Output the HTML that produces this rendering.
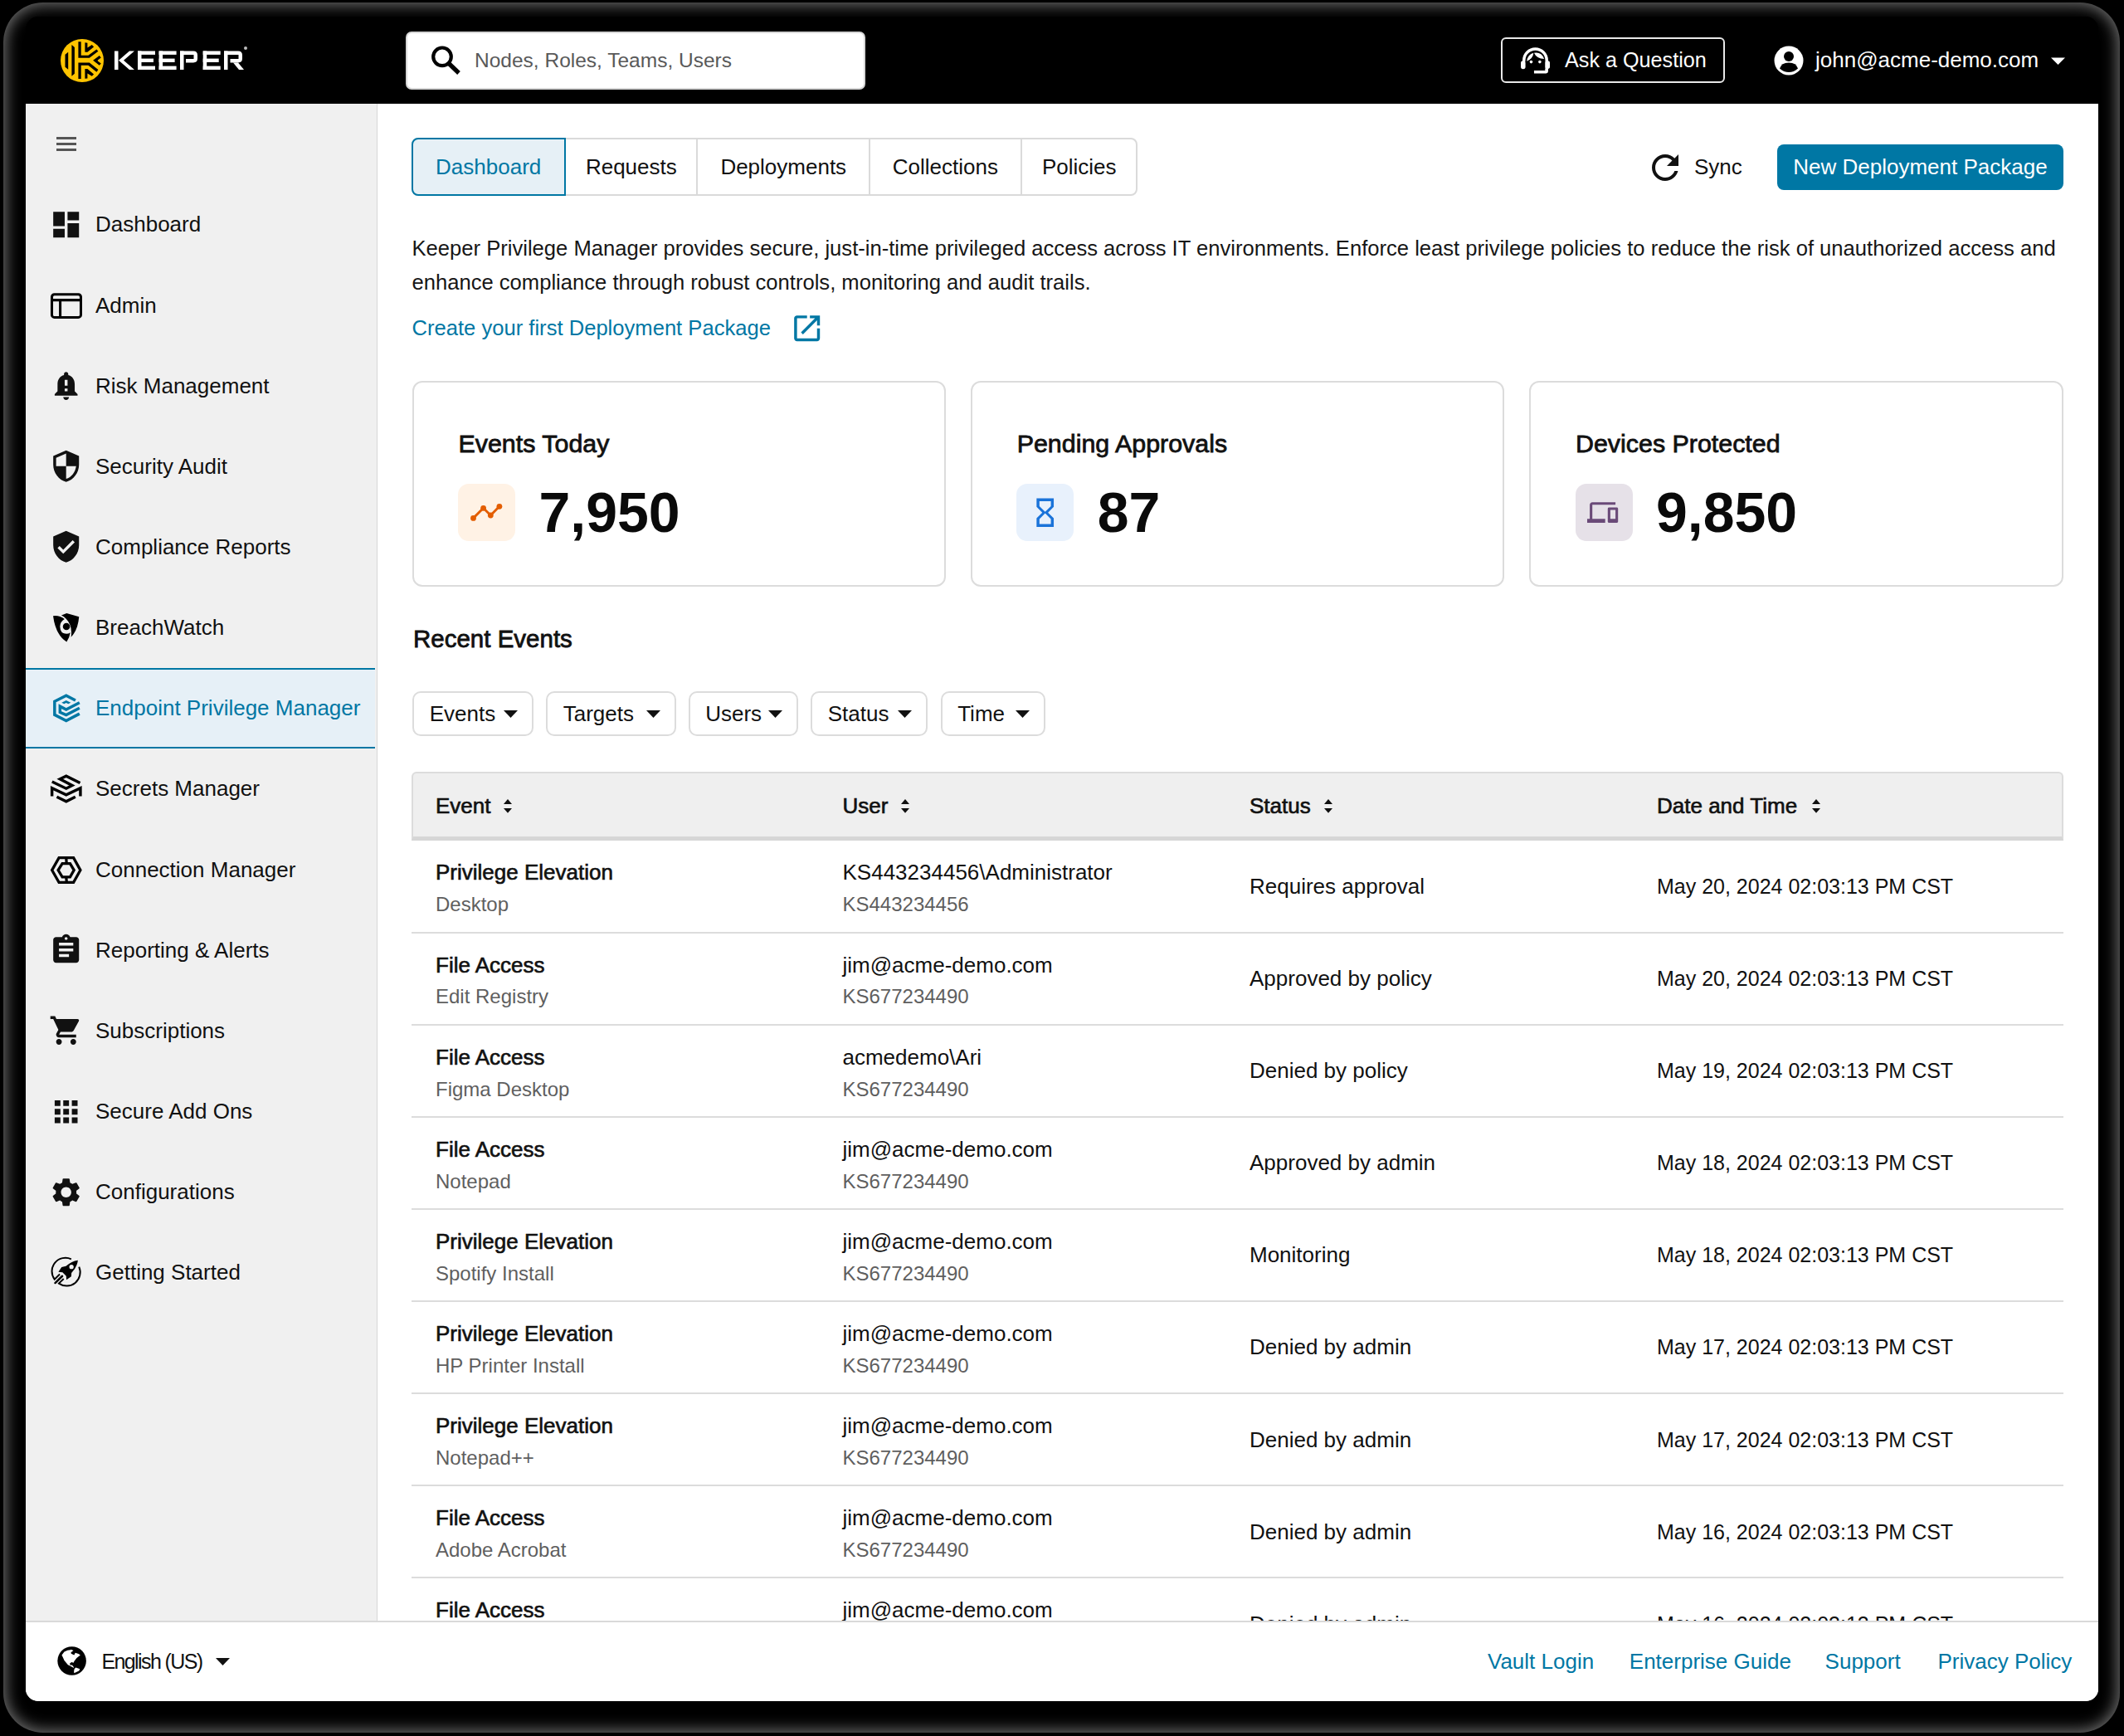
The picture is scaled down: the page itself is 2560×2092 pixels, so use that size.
<!DOCTYPE html>
<html><head><meta charset="utf-8">
<style>
*{box-sizing:border-box;margin:0;padding:0}
html,body{width:2560px;height:2092px;overflow:hidden;background:#000}
body{position:relative;font-family:"Liberation Sans",sans-serif;color:#141414}
.a{position:absolute}
.t{position:absolute;white-space:nowrap;line-height:40px;height:40px;font-size:26px}
svg{position:absolute;overflow:visible}
</style></head><body>
<!-- shadow fringe -->
<div class="a" style="left:4px;top:3px;width:2551px;height:2085px;border-radius:48px;background:#000;box-shadow:inset 0 0 18px 3px rgba(150,150,150,.75)"></div>
<!-- window base -->
<div class="a" style="left:31px;top:100px;width:2498px;height:1950px;border-radius:0 0 15px 15px;background:#fff"></div>
<!-- header -->
<div class="a" style="left:31px;top:20px;width:2498px;height:105px;background:#000;border-radius:15px 15px 0 0"></div>
<!-- logo -->
<svg style="left:0;top:0" width="320" height="124" viewBox="0 0 320 124">
  <defs><clipPath id="lc"><circle cx="99" cy="73" r="26"/></clipPath></defs>
  <circle cx="99" cy="73" r="26" fill="#ffc400"/>
  <g fill="#000">
    <path d="M78.5 65.7L82.2 62.7V83.8L78.5 80.8Z"/>
    <path d="M86.4 54L89.9 57V88.8L86.4 91.8Z"/>
    <path d="M94.4 50.35H97.7V66.7H106.4L116.4 59.4L118.4 61.7L107.8 69.7H94.4Z"/>
    <path d="M94.4 75.4H107.8L118.4 84.1L116.4 86.8L106.4 78.7H97.7V95.1H94.4Z"/>
    <path d="M102.4 51.2L105.4 51.7V57.4L110.8 54L113.1 56.4L105.4 62.7H102.4Z"/>
    <path d="M102.4 83.1H105.4L113.1 89.4L110.8 91.8L105.4 88.4V94.5L102.4 94.8Z"/>
    <path d="M112.1 72.7L119.8 67.05L121.8 69.4L117.8 72.4V73.4L121.8 76.4L119.8 78.75Z"/>
  </g>
  <g fill="#fff">
    <rect x="138" y="61.5" width="4.5" height="22.5"/>
    <path d="M143 72.75L156 61.5H162L149 72.75L162 84H156Z"/>
    <rect x="166" y="61.5" width="4.5" height="22.5"/><rect x="166" y="61.5" width="21" height="4.4"/><rect x="166" y="70.6" width="19" height="4.4"/><rect x="166" y="79.6" width="21" height="4.4"/>
    <rect x="191.6" y="61.5" width="4.5" height="22.5"/><rect x="191.6" y="61.5" width="21" height="4.4"/><rect x="191.6" y="70.6" width="19" height="4.4"/><rect x="191.6" y="79.6" width="21" height="4.4"/>
    <rect x="217" y="61.5" width="4.5" height="22.5"/>
    <path d="M217 61.5H233Q238 61.5 238 66.5V70.5Q238 75.4 233 75.4H224V71H233.5V65.9H217Z"/>
    <rect x="244.7" y="61.5" width="4.5" height="22.5"/><rect x="244.7" y="61.5" width="21" height="4.4"/><rect x="244.7" y="70.6" width="19" height="4.4"/><rect x="244.7" y="79.6" width="21" height="4.4"/>
    <rect x="270" y="61.5" width="4.5" height="22.5"/>
    <path d="M270 61.5H287Q292 61.5 292 66.5V70.5Q292 75.4 287 75.4H277.5V71H287.5V65.9H270Z"/>
    <path d="M281 75.4H287L294 84H288Z"/>
    <circle cx="296" cy="58" r="2" fill="#bbb"/>
  </g>
</svg>
<!-- search -->
<div class="a" style="left:489px;top:38px;width:554px;height:70px;background:#fff;border:2px solid #d6d6d6;border-radius:7px"></div>
<svg style="left:505px;top:44px" width="60" height="60" viewBox="0 0 60 60">
  <circle cx="28" cy="24.3" r="10.8" stroke="#000" stroke-width="4.2" fill="none"/>
  <path d="M36 32.5L48 44" stroke="#000" stroke-width="5.2"/>
</svg>
<div class="t" style="left:572px;top:53px;font-size:24.5px;color:#595959">Nodes, Roles, Teams, Users</div>
<!-- ask a question -->
<div class="a" style="left:1809px;top:45px;width:270px;height:55px;border:2px solid #e8e8e8;border-radius:6px"></div>
<svg style="left:1826px;top:50px" width="48" height="48" viewBox="0 0 1736 1736" fill="#fff">
  <path d="M390 880V818A496 496 0 0 1 1382 818V1260" fill="none" stroke="#fff" stroke-width="125"/>
  <rect x="255" y="840" width="200" height="360" rx="95"/>
  <rect x="1320" y="840" width="200" height="350" rx="95"/>
  <path d="M830 1265H1320V1190H1445V1300Q1445 1390 1355 1390H830Z"/>
  <path d="M510 860Q560 560 810 500Q780 760 510 860Z"/>
  <path d="M830 500Q1150 440 1270 760Q950 760 830 500Z"/>
  <circle cx="705" cy="890" r="65"/><circle cx="1080" cy="890" r="65"/>
</svg>
<div class="t" style="left:1886px;top:52px;font-size:25.2px;color:#fff">Ask a Question</div>
<!-- user -->
<svg style="left:2138px;top:55px" width="36" height="36" viewBox="0 0 36 36">
  <circle cx="18" cy="18" r="17.5" fill="#fff"/>
  <circle cx="18" cy="13" r="6" fill="#000"/>
  <path d="M7 27.5Q9 20.5 18 20.5Q27 20.5 29 27.5Q24 32 18 32Q12 32 7 27.5Z" fill="#000"/>
</svg>
<div class="t" style="left:2188px;top:52px;font-size:26px;color:#fff">john@acme-demo.com</div>
<svg style="left:2470px;top:68px" width="22" height="12" viewBox="0 0 22 12"><path d="M2 1.5H19L10.5 10Z" fill="#fff"/></svg>

<!-- sidebar -->
<div class="a" style="left:31px;top:125px;width:423.5px;height:1829px;background:#f0f0f0;border-right:1.5px solid #d6d6d6"></div>
<div class="a" style="left:68px;top:165px;width:24px;height:3.4px;background:#555"></div><div class="a" style="left:68px;top:172px;width:24px;height:3.4px;background:#555"></div><div class="a" style="left:68px;top:178.7px;width:24px;height:3.4px;background:#555"></div>
<div class="a" style="left:31px;top:805px;width:421px;height:97px;background:#e6f0f7;border-top:2px solid #0077a4;border-bottom:2px solid #0077a4"></div>
<svg style="left:59px;top:249.8px" width="41.4" height="41.4" viewBox="0 0 24 24" fill="#111"><path d="M3 13h8V3H3v10zm0 8h8v-6H3v6zm10 0h8V11h-8v10zm0-18v6h8V3h-8z"/></svg>
<div class="t" style="left:115px;top:250.3px;color:#111">Dashboard</div>
<svg style="left:56px;top:343.5px" width="48" height="48" viewBox="0 0 1736 1736" fill="#000"><rect x="235" y="390" width="1265" height="1000" rx="110" fill="none" stroke="#000" stroke-width="110"/><path d="M235 638H1500M600 638V1390" stroke="#000" stroke-width="110"/></svg>
<div class="t" style="left:115px;top:347.5px;color:#111">Admin</div>
<svg style="left:59px;top:444.1px" width="41.4" height="41.4" viewBox="0 0 24 24" fill="#111"><path d="M18 16v-5c0-3.08-1.64-5.64-4.5-6.32V4c0-.83-.67-1.5-1.5-1.5s-1.5.67-1.5 1.5v.68C7.63 5.36 6 7.92 6 11v5l-2 2v1h16v-1l-2-2zm-5 0h-2v-2h2v2zm0-4h-2V8h2v4zm-1 10c1.1 0 2-.9 2-2h-4c0 1.1.89 2 2 2z"/></svg>
<div class="t" style="left:115px;top:444.6px;color:#111">Risk Management</div>
<svg style="left:59px;top:541.2px" width="41.4" height="41.4" viewBox="0 0 24 24" fill="#111"><path d="M12 1L3 5v6c0 5.55 3.84 10.74 9 12 5.16-1.26 9-6.45 9-12V5l-9-4zm0 10.99h7c-.53 4.12-3.28 7.79-7 8.94V12H5V6.3l7-3.11v8.8z"/></svg>
<div class="t" style="left:115px;top:541.8px;color:#111">Security Audit</div>
<svg style="left:59px;top:638.4px" width="41.4" height="41.4" viewBox="0 0 24 24" fill="#111"><path d="M12 1L3 5v6c0 5.55 3.84 10.74 9 12 5.16-1.26 9-6.45 9-12V5l-9-4zm-2 16l-4-4 1.41-1.41L10 14.17l6.59-6.59L18 9l-8 8z"/></svg>
<div class="t" style="left:115px;top:638.9px;color:#111">Compliance Reports</div>
<svg style="left:56px;top:732.0px" width="48" height="48" viewBox="0 0 1736 1736" fill="#000"><path d="M290 370Q560 330 790 510Q600 620 590 830Q600 1150 870 1150Q960 1150 1040 1090Q1000 1330 880 1500Q400 1200 290 370Z"/><path d="M650 340L880 255L1420 410Q1370 1000 1070 1290Q1150 800 850 490Q770 400 650 340Z"/><circle cx="870" cy="830" r="155"/></svg>
<div class="t" style="left:115px;top:736.0px;color:#111">BreachWatch</div>
<svg style="left:56px;top:829.2px" width="48" height="48" viewBox="0 0 1736 1736" fill="#000"><g fill="none" stroke="#0077a4" stroke-width="125" stroke-linejoin="miter"><path d="M1265 545L860 330L355 590V1170L860 1430L1440 1125"/><path d="M1440 640L860 940L590 800V1060L860 1175L1440 880"/></g><path fill="#0077a4" d="M660 640L860 540L1060 640L950 700L860 650L770 700Z"/></svg>
<div class="t" style="left:115px;top:833.2px;color:#0077a4">Endpoint Privilege Manager</div>
<svg style="left:56px;top:926.4px" width="48" height="48" viewBox="0 0 1736 1736" fill="#000"><g fill="none" stroke="#000" stroke-width="125"><path d="M1465 635L860 330L590 460L1120 740L860 875L245 580"/><path d="M240 1210V860L860 1150L1480 860V1210"/><path d="M450 1240L860 1440L1260 1240"/></g></svg>
<div class="t" style="left:115px;top:930.4px;color:#111">Secrets Manager</div>
<svg style="left:56px;top:1023.5px" width="48" height="48" viewBox="0 0 1736 1736" fill="#000"><g fill="none" stroke="#000" stroke-width="118" stroke-linejoin="miter"><path d="M545 350H1180L1480 890L1180 1425H545L240 890Z"/><path d="M690 605H1030L1200 890L1030 1185H690L510 890Z"/><path d="M860 350L875 605M860 1185L880 1425"/></g></svg>
<div class="t" style="left:115px;top:1027.5px;color:#111">Connection Manager</div>
<svg style="left:59px;top:1124.2px" width="41.4" height="41.4" viewBox="0 0 24 24" fill="#111"><path d="M19 3h-4.18C14.4 1.84 13.3 1 12 1c-1.3 0-2.4.84-2.82 2H5c-1.1 0-2 .9-2 2v14c0 1.1.9 2 2 2h14c1.1 0 2-.9 2-2V5c0-1.1-.9-2-2-2zm-7 0c.55 0 1 .45 1 1s-.45 1-1 1-1-.45-1-1 .45-1 1-1zm2 14H7v-2h7v2zm3-4H7v-2h10v2zm0-4H7V7h10v2z"/></svg>
<div class="t" style="left:115px;top:1124.7px;color:#111">Reporting &amp; Alerts</div>
<svg style="left:59px;top:1221.3px" width="41.4" height="41.4" viewBox="0 0 24 24" fill="#111"><path d="M7 18c-1.1 0-1.99.9-1.99 2S5.9 22 7 22s2-.9 2-2-.9-2-2-2zM1 2v2h2l3.6 7.59-1.35 2.45c-.16.28-.25.61-.25.96 0 1.1.9 2 2 2h12v-2H7.42c-.14 0-.25-.11-.25-.25l.03-.12.9-1.63h7.45c.75 0 1.41-.41 1.75-1.03l3.58-6.49c.08-.14.12-.31.12-.48 0-.55-.45-1-1-1H5.21l-.94-2H1zm16 16c-1.1 0-1.99.9-1.99 2s.89 2 1.99 2 2-.9 2-2-.9-2-2-2z"/></svg>
<div class="t" style="left:115px;top:1221.8px;color:#111">Subscriptions</div>
<svg style="left:59px;top:1318.5px" width="41.4" height="41.4" viewBox="0 0 24 24" fill="#111"><path d="M4 8h4V4H4v4zm6 12h4v-4h-4v4zm-6 0h4v-4H4v4zm0-6h4v-4H4v4zm6 0h4v-4h-4v4zm6-10v4h4V4h-4zm-6 4h4V4h-4v4zm6 6h4v-4h-4v4zm0 6h4v-4h-4v4z"/></svg>
<div class="t" style="left:115px;top:1319.0px;color:#111">Secure Add Ons</div>
<svg style="left:59px;top:1415.6px" width="41.4" height="41.4" viewBox="0 0 24 24" fill="#111"><path d="M19.14 12.94c.04-.3.06-.61.06-.94 0-.32-.02-.64-.07-.94l2.03-1.58c.18-.14.23-.41.12-.61l-1.92-3.32c-.12-.22-.37-.29-.59-.22l-2.39.96c-.5-.38-1.03-.7-1.62-.94l-.36-2.54c-.04-.24-.24-.41-.48-.41h-3.84c-.24 0-.43.17-.47.41l-.36 2.54c-.59.24-1.13.57-1.62.94l-2.39-.96c-.22-.08-.47 0-.59.22L2.74 8.87c-.12.21-.08.47.12.61l2.03 1.58c-.05.3-.09.63-.09.94s.02.64.07.94l-2.03 1.58c-.18.14-.23.41-.12.61l1.92 3.32c.12.22.37.29.59.22l2.39-.96c.5.38 1.03.7 1.62.94l.36 2.54c.05.24.24.41.48.41h3.84c.24 0 .44-.17.47-.41l.36-2.54c.59-.24 1.13-.56 1.62-.94l2.39.96c.22.08.47 0 .59-.22l1.92-3.32c.12-.22.07-.47-.12-.61l-2.01-1.58zM12 15.6c-1.98 0-3.6-1.62-3.6-3.6s1.62-3.6 3.6-3.6 3.6 1.62 3.6 3.6-1.62 3.6-3.6 3.6z"/></svg>
<div class="t" style="left:115px;top:1416.1px;color:#111">Configurations</div>
<svg style="left:56px;top:1509.2px" width="48" height="48" viewBox="0 0 1736 1736" fill="#000"><g fill="none" stroke="#000" stroke-width="72"><path d="M1080 300A590 590 0 0 0 350 1180L580 960"/><path d="M750 1160L540 1360A590 590 0 0 0 1420 640"/></g><path d="M380 1340L690 1040" stroke="#000" stroke-width="90" stroke-linecap="round"/><path d="M1370 350Q1100 380 850 610L660 650L520 860L700 880L860 1040L870 1200L1080 1060L1090 900Q1340 650 1370 350Z"/><circle cx="1090" cy="640" r="95" fill="#f0f0f0"/></svg>
<div class="t" style="left:115px;top:1513.2px;color:#111">Getting Started</div>
<div class="a" style="left:496px;top:166px;width:875px;height:70px;border:2px solid #dadada;border-radius:8px"></div>
<div class="a" style="left:680.4px;top:167px;width:2px;height:68px;background:#dadada"></div>
<div class="a" style="left:839.3px;top:167px;width:2px;height:68px;background:#dadada"></div>
<div class="a" style="left:1047.2px;top:167px;width:2px;height:68px;background:#dadada"></div>
<div class="a" style="left:1229.5px;top:167px;width:2px;height:68px;background:#dadada"></div>
<div class="a" style="left:496px;top:166px;width:186.4px;height:70px;border:2px solid #0077a4;border-radius:8px 0 0 8px;background:#e6f0f6"></div>
<div class="t" style="left:496.0px;width:185.4px;top:181px;text-align:center;color:#0077a4">Dashboard</div>
<div class="t" style="left:681.4px;width:158.9px;top:181px;text-align:center;color:#111">Requests</div>
<div class="t" style="left:840.3px;width:207.9px;top:181px;text-align:center;color:#111">Deployments</div>
<div class="t" style="left:1048.2px;width:182.3px;top:181px;text-align:center;color:#111">Collections</div>
<div class="t" style="left:1230.5px;width:140.5px;top:181px;text-align:center;color:#111">Policies</div>
<svg style="left:1983px;top:177.5px" width="48" height="48" viewBox="0 0 24 24" fill="#111"><path d="M17.65 6.35C16.2 4.9 14.21 4 12 4c-4.42 0-7.99 3.58-7.99 8s3.57 8 7.99 8c3.73 0 6.84-2.55 7.73-6h-2.08c-.82 2.33-3.04 4-5.65 4-3.31 0-6-2.69-6-6s2.69-6 6-6c1.66 0 3.14.69 4.22 1.78L13 11h7V4l-2.35 2.35z"/></svg>
<div class="t" style="left:2042px;top:181px;color:#111">Sync</div>
<div class="a" style="left:2142px;top:173.5px;width:345px;height:55px;background:#0077a4;border-radius:8px"></div>
<div class="t" style="left:2142px;width:345px;top:181px;text-align:center;color:#fff">New Deployment Package</div>
<div class="t" style="left:496.5px;top:278.5px;font-size:25.6px;color:#161616">Keeper Privilege Manager provides secure, just-in-time privileged access across IT environments. Enforce least privilege policies to reduce the risk of unauthorized access and</div>
<div class="t" style="left:496.5px;top:320.3px;font-size:25.6px;color:#161616">enhance compliance through robust controls, monitoring and audit trails.</div>
<div class="t" style="left:496.5px;top:375px;font-size:25.6px;color:#0077a4">Create your first Deployment Package</div>
<svg style="left:952.4px;top:375.3px" width="41.4" height="41.4" viewBox="0 0 24 24" fill="#0077a4"><path d="M19 19H5V5h7V3H5c-1.11 0-2 .9-2 2v14c0 1.1.89 2 2 2h14c1.1 0 2-.9 2-2v-7h-2v7zM14 3v2h3.59l-9.83 9.83 1.41 1.41L19 6.41V10h2V3h-7z"/></svg>
<div class="a" style="left:496.5px;top:459px;width:643.5px;height:248px;border:2px solid #dcdcdc;border-radius:12px"></div>
<div class="t" style="left:552.5px;top:514px;font-size:30.4px;-webkit-text-stroke:0.8px #111;color:#111">Events Today</div>
<div class="a" style="left:552.0px;top:583px;width:69px;height:69px;border-radius:13px;background:#fff2e5"></div>
<div class="t" style="left:649.5px;top:582px;height:70px;line-height:70px;font-size:68px;font-weight:700;color:#0a0a0a">7,950</div>
<div class="a" style="left:1169.7px;top:459px;width:643.5px;height:248px;border:2px solid #dcdcdc;border-radius:12px"></div>
<div class="t" style="left:1225.7px;top:514px;font-size:30.4px;-webkit-text-stroke:0.8px #111;color:#111">Pending Approvals</div>
<div class="a" style="left:1225.2px;top:583px;width:69px;height:69px;border-radius:13px;background:#e8f1fc"></div>
<div class="t" style="left:1322.7px;top:582px;height:70px;line-height:70px;font-size:68px;font-weight:700;color:#0a0a0a">87</div>
<div class="a" style="left:1843.0px;top:459px;width:643.5px;height:248px;border:2px solid #dcdcdc;border-radius:12px"></div>
<div class="t" style="left:1899.0px;top:514px;font-size:30.4px;-webkit-text-stroke:0.8px #111;color:#111">Devices Protected</div>
<div class="a" style="left:1898.5px;top:583px;width:69px;height:69px;border-radius:13px;background:#e6e1e8"></div>
<div class="t" style="left:1996.0px;top:582px;height:70px;line-height:70px;font-size:68px;font-weight:700;color:#0a0a0a">9,850</div>
<svg style="left:551.8px;top:583px" width="69" height="69" viewBox="540 570 100 100" preserveAspectRatio="none"></svg>
<svg style="left:0;top:0" width="1" height="1"><g fill="#e35d00" stroke="#e35d00"><path d="M570.5 624.4L582.6 612.3L591.3 621L601.9 610.3" fill="none" stroke-width="2.9"/><circle cx="570.5" cy="624.4" r="3.4" stroke="none"/><circle cx="582.6" cy="612.3" r="3.4" stroke="none"/><circle cx="591.3" cy="621" r="3.4" stroke="none"/><circle cx="601.9" cy="610.3" r="3.4" stroke="none"/></g></svg>
<svg style="left:1238.6px;top:596.6px" width="41.4" height="41.4" viewBox="0 0 24 24" fill="#1a73d9"><path d="M6 2v6h.01L6 8.01 10 12l-4 4 .01.01H6V22h12v-5.99h-.01L18 16l-4-4 4-3.99-.01-.01H18V2H6zm10 14.5V20H8v-3.5l4-4 4 4zm-4-5l-4-4V4h8v3.5l-4 4z"/></svg>
<svg style="left:1913.1px;top:599.1px" width="37.2" height="37.2" viewBox="0 0 24 24" fill="#6a4a78"><path d="M4 6h18V4H4c-1.1 0-2 .9-2 2v11H0v3h14v-3H4V6zm19 2h-6c-.55 0-1 .45-1 1v10c0 .55.45 1 1 1h6c.55 0 1-.45 1-1V9c0-.55-.45-1-1-1zm-1 9h-4v-7h4v7z"/></svg>
<div class="t" style="left:498px;top:750px;font-size:29.5px;-webkit-text-stroke:0.8px #111;color:#111">Recent Events</div>
<div class="a" style="left:497.0px;top:833.4px;width:145.7px;height:54px;border:2px solid #dcdcdc;border-radius:10px"></div>
<div class="t" style="left:517.7px;top:840px;color:#111">Events</div>
<svg style="left:607.2px;top:856px" width="17" height="9" viewBox="0 0 17 9"><path d="M0 0H17L8.5 9Z" fill="#111"/></svg>
<div class="a" style="left:658.0px;top:833.4px;width:156.5px;height:54px;border:2px solid #dcdcdc;border-radius:10px"></div>
<div class="t" style="left:678.7px;top:840px;color:#111">Targets</div>
<svg style="left:779.0px;top:856px" width="17" height="9" viewBox="0 0 17 9"><path d="M0 0H17L8.5 9Z" fill="#111"/></svg>
<div class="a" style="left:829.5px;top:833.4px;width:132.2px;height:54px;border:2px solid #dcdcdc;border-radius:10px"></div>
<div class="t" style="left:850.2px;top:840px;color:#111">Users</div>
<svg style="left:926.2px;top:856px" width="17" height="9" viewBox="0 0 17 9"><path d="M0 0H17L8.5 9Z" fill="#111"/></svg>
<div class="a" style="left:977.0px;top:833.4px;width:140.7px;height:54px;border:2px solid #dcdcdc;border-radius:10px"></div>
<div class="t" style="left:997.7px;top:840px;color:#111">Status</div>
<svg style="left:1082.2px;top:856px" width="17" height="9" viewBox="0 0 17 9"><path d="M0 0H17L8.5 9Z" fill="#111"/></svg>
<div class="a" style="left:1133.5px;top:833.4px;width:126.2px;height:54px;border:2px solid #dcdcdc;border-radius:10px"></div>
<div class="t" style="left:1154.2px;top:840px;color:#111">Time</div>
<svg style="left:1224.2px;top:856px" width="17" height="9" viewBox="0 0 17 9"><path d="M0 0H17L8.5 9Z" fill="#111"/></svg>
<div class="a" style="left:496px;top:930px;width:1990.5px;height:83px;background:#efefef;border:2px solid #dcdcdc;border-bottom:5px solid #d6d6d6;border-radius:6px 6px 0 0"></div>
<div class="t" style="left:525px;top:951px;-webkit-text-stroke:0.65px #111;color:#111">Event</div>
<div class="t" style="left:1015.5px;top:951px;-webkit-text-stroke:0.65px #111;color:#111">User</div>
<div class="t" style="left:1506px;top:951px;-webkit-text-stroke:0.65px #111;color:#111">Status</div>
<div class="t" style="left:1997px;top:951px;-webkit-text-stroke:0.65px #111;color:#111">Date and Time</div>
<svg style="left:607.2px;top:962.9px" width="10" height="17" viewBox="0 0 10 17"><path d="M5 0L10 5.9H0Z M0 11.1H10L5 16.8Z" fill="#111"/></svg>
<svg style="left:1086.0px;top:962.9px" width="10" height="17" viewBox="0 0 10 17"><path d="M5 0L10 5.9H0Z M0 11.1H10L5 16.8Z" fill="#111"/></svg>
<svg style="left:1595.8px;top:962.9px" width="10" height="17" viewBox="0 0 10 17"><path d="M5 0L10 5.9H0Z M0 11.1H10L5 16.8Z" fill="#111"/></svg>
<svg style="left:2183.6px;top:962.9px" width="10" height="17" viewBox="0 0 10 17"><path d="M5 0L10 5.9H0Z M0 11.1H10L5 16.8Z" fill="#111"/></svg>
<div class="a" style="left:454px;top:1013px;width:2075px;height:940px;overflow:hidden">
<div class="t" style="left:71px;top:18.4px;-webkit-text-stroke:0.65px #111;color:#111">Privilege Elevation</div>
<div class="t" style="left:71px;top:57.3px;font-size:24px;color:#5f5f5f">Desktop</div>
<div class="t" style="left:561.5px;top:18.4px;color:#111">KS443234456\Administrator</div>
<div class="t" style="left:561.5px;top:57.3px;font-size:24px;color:#5f5f5f">KS443234456</div>
<div class="t" style="left:1052px;top:34.9px;color:#111">Requires approval</div>
<div class="t" style="left:1543px;top:34.9px;font-size:25px;color:#111">May 20, 2024 02:03:13 PM CST</div>
<div class="a" style="left:42px;top:109.7px;width:1990.5px;height:2px;background:#dcdcdc"></div>
<div class="t" style="left:71px;top:129.5px;-webkit-text-stroke:0.65px #111;color:#111">File Access</div>
<div class="t" style="left:71px;top:168.4px;font-size:24px;color:#5f5f5f">Edit Registry</div>
<div class="t" style="left:561.5px;top:129.5px;color:#111">jim@acme-demo.com</div>
<div class="t" style="left:561.5px;top:168.4px;font-size:24px;color:#5f5f5f">KS677234490</div>
<div class="t" style="left:1052px;top:146.0px;color:#111">Approved by policy</div>
<div class="t" style="left:1543px;top:146.0px;font-size:25px;color:#111">May 20, 2024 02:03:13 PM CST</div>
<div class="a" style="left:42px;top:220.8px;width:1990.5px;height:2px;background:#dcdcdc"></div>
<div class="t" style="left:71px;top:240.6px;-webkit-text-stroke:0.65px #111;color:#111">File Access</div>
<div class="t" style="left:71px;top:279.5px;font-size:24px;color:#5f5f5f">Figma Desktop</div>
<div class="t" style="left:561.5px;top:240.6px;color:#111">acmedemo\Ari</div>
<div class="t" style="left:561.5px;top:279.5px;font-size:24px;color:#5f5f5f">KS677234490</div>
<div class="t" style="left:1052px;top:257.1px;color:#111">Denied by policy</div>
<div class="t" style="left:1543px;top:257.1px;font-size:25px;color:#111">May 19, 2024 02:03:13 PM CST</div>
<div class="a" style="left:42px;top:331.9px;width:1990.5px;height:2px;background:#dcdcdc"></div>
<div class="t" style="left:71px;top:351.7px;-webkit-text-stroke:0.65px #111;color:#111">File Access</div>
<div class="t" style="left:71px;top:390.6px;font-size:24px;color:#5f5f5f">Notepad</div>
<div class="t" style="left:561.5px;top:351.7px;color:#111">jim@acme-demo.com</div>
<div class="t" style="left:561.5px;top:390.6px;font-size:24px;color:#5f5f5f">KS677234490</div>
<div class="t" style="left:1052px;top:368.2px;color:#111">Approved by admin</div>
<div class="t" style="left:1543px;top:368.2px;font-size:25px;color:#111">May 18, 2024 02:03:13 PM CST</div>
<div class="a" style="left:42px;top:443.0px;width:1990.5px;height:2px;background:#dcdcdc"></div>
<div class="t" style="left:71px;top:462.8px;-webkit-text-stroke:0.65px #111;color:#111">Privilege Elevation</div>
<div class="t" style="left:71px;top:501.7px;font-size:24px;color:#5f5f5f">Spotify Install</div>
<div class="t" style="left:561.5px;top:462.8px;color:#111">jim@acme-demo.com</div>
<div class="t" style="left:561.5px;top:501.7px;font-size:24px;color:#5f5f5f">KS677234490</div>
<div class="t" style="left:1052px;top:479.3px;color:#111">Monitoring</div>
<div class="t" style="left:1543px;top:479.3px;font-size:25px;color:#111">May 18, 2024 02:03:13 PM CST</div>
<div class="a" style="left:42px;top:554.1px;width:1990.5px;height:2px;background:#dcdcdc"></div>
<div class="t" style="left:71px;top:573.9px;-webkit-text-stroke:0.65px #111;color:#111">Privilege Elevation</div>
<div class="t" style="left:71px;top:612.8px;font-size:24px;color:#5f5f5f">HP Printer Install</div>
<div class="t" style="left:561.5px;top:573.9px;color:#111">jim@acme-demo.com</div>
<div class="t" style="left:561.5px;top:612.8px;font-size:24px;color:#5f5f5f">KS677234490</div>
<div class="t" style="left:1052px;top:590.4px;color:#111">Denied by admin</div>
<div class="t" style="left:1543px;top:590.4px;font-size:25px;color:#111">May 17, 2024 02:03:13 PM CST</div>
<div class="a" style="left:42px;top:665.2px;width:1990.5px;height:2px;background:#dcdcdc"></div>
<div class="t" style="left:71px;top:685.0px;-webkit-text-stroke:0.65px #111;color:#111">Privilege Elevation</div>
<div class="t" style="left:71px;top:723.9px;font-size:24px;color:#5f5f5f">Notepad++</div>
<div class="t" style="left:561.5px;top:685.0px;color:#111">jim@acme-demo.com</div>
<div class="t" style="left:561.5px;top:723.9px;font-size:24px;color:#5f5f5f">KS677234490</div>
<div class="t" style="left:1052px;top:701.5px;color:#111">Denied by admin</div>
<div class="t" style="left:1543px;top:701.5px;font-size:25px;color:#111">May 17, 2024 02:03:13 PM CST</div>
<div class="a" style="left:42px;top:776.3px;width:1990.5px;height:2px;background:#dcdcdc"></div>
<div class="t" style="left:71px;top:796.1px;-webkit-text-stroke:0.65px #111;color:#111">File Access</div>
<div class="t" style="left:71px;top:835.0px;font-size:24px;color:#5f5f5f">Adobe Acrobat</div>
<div class="t" style="left:561.5px;top:796.1px;color:#111">jim@acme-demo.com</div>
<div class="t" style="left:561.5px;top:835.0px;font-size:24px;color:#5f5f5f">KS677234490</div>
<div class="t" style="left:1052px;top:812.6px;color:#111">Denied by admin</div>
<div class="t" style="left:1543px;top:812.6px;font-size:25px;color:#111">May 16, 2024 02:03:13 PM CST</div>
<div class="a" style="left:42px;top:887.4px;width:1990.5px;height:2px;background:#dcdcdc"></div>
<div class="t" style="left:71px;top:907.2px;-webkit-text-stroke:0.65px #111;color:#111">File Access</div>
<div class="t" style="left:71px;top:946.1px;font-size:24px;color:#5f5f5f">Adobe Reader</div>
<div class="t" style="left:561.5px;top:907.2px;color:#111">jim@acme-demo.com</div>
<div class="t" style="left:561.5px;top:946.1px;font-size:24px;color:#5f5f5f">KS677234490</div>
<div class="t" style="left:1052px;top:923.7px;color:#111">Denied by admin</div>
<div class="t" style="left:1543px;top:923.7px;font-size:25px;color:#111">May 16, 2024 02:03:13 PM CST</div>
<div class="a" style="left:42px;top:998.5px;width:1990.5px;height:2px;background:#dcdcdc"></div>
</div>
<!-- footer -->
<div class="a" style="left:31px;top:1953px;width:2498px;height:97px;background:#fff;border-top:2px solid #d9d9d9;border-radius:0 0 15px 15px"></div>
<svg style="left:62px;top:1978px" width="48" height="48" viewBox="0 0 1736 1736">
  <circle cx="890" cy="850" r="625" fill="#000"/>
  <path fill="#fff" d="M450 600L560 450L700 390L830 375L850 350L960 400L850 480L860 530L990 600L1040 500L1180 540L1260 600L1100 720L990 870L960 930L880 900L800 960L820 1040L900 1030L980 1130L960 1150L830 1080L720 1020L560 830L500 700Z"/>
  <path fill="#fff" d="M1000 1200L1060 1140L1240 1200L1200 1280L990 1380L980 1300Z"/>
</svg>
<div class="t" style="left:122.4px;top:1982px;font-size:25px;letter-spacing:-1.6px;color:#111">English (US)</div>
<svg style="left:260px;top:1998px" width="17" height="9" viewBox="0 0 17 9"><path d="M0 0H17L8.5 9Z" fill="#111"/></svg>
<div class="t" style="left:1793px;top:1981.5px;color:#0077a4">Vault Login</div>
<div class="t" style="left:1963.8px;top:1981.5px;color:#0077a4">Enterprise Guide</div>
<div class="t" style="left:2199.6px;top:1981.5px;color:#0077a4">Support</div>
<div class="t" style="left:2335.5px;top:1981.5px;color:#0077a4">Privacy Policy</div>
</body></html>
